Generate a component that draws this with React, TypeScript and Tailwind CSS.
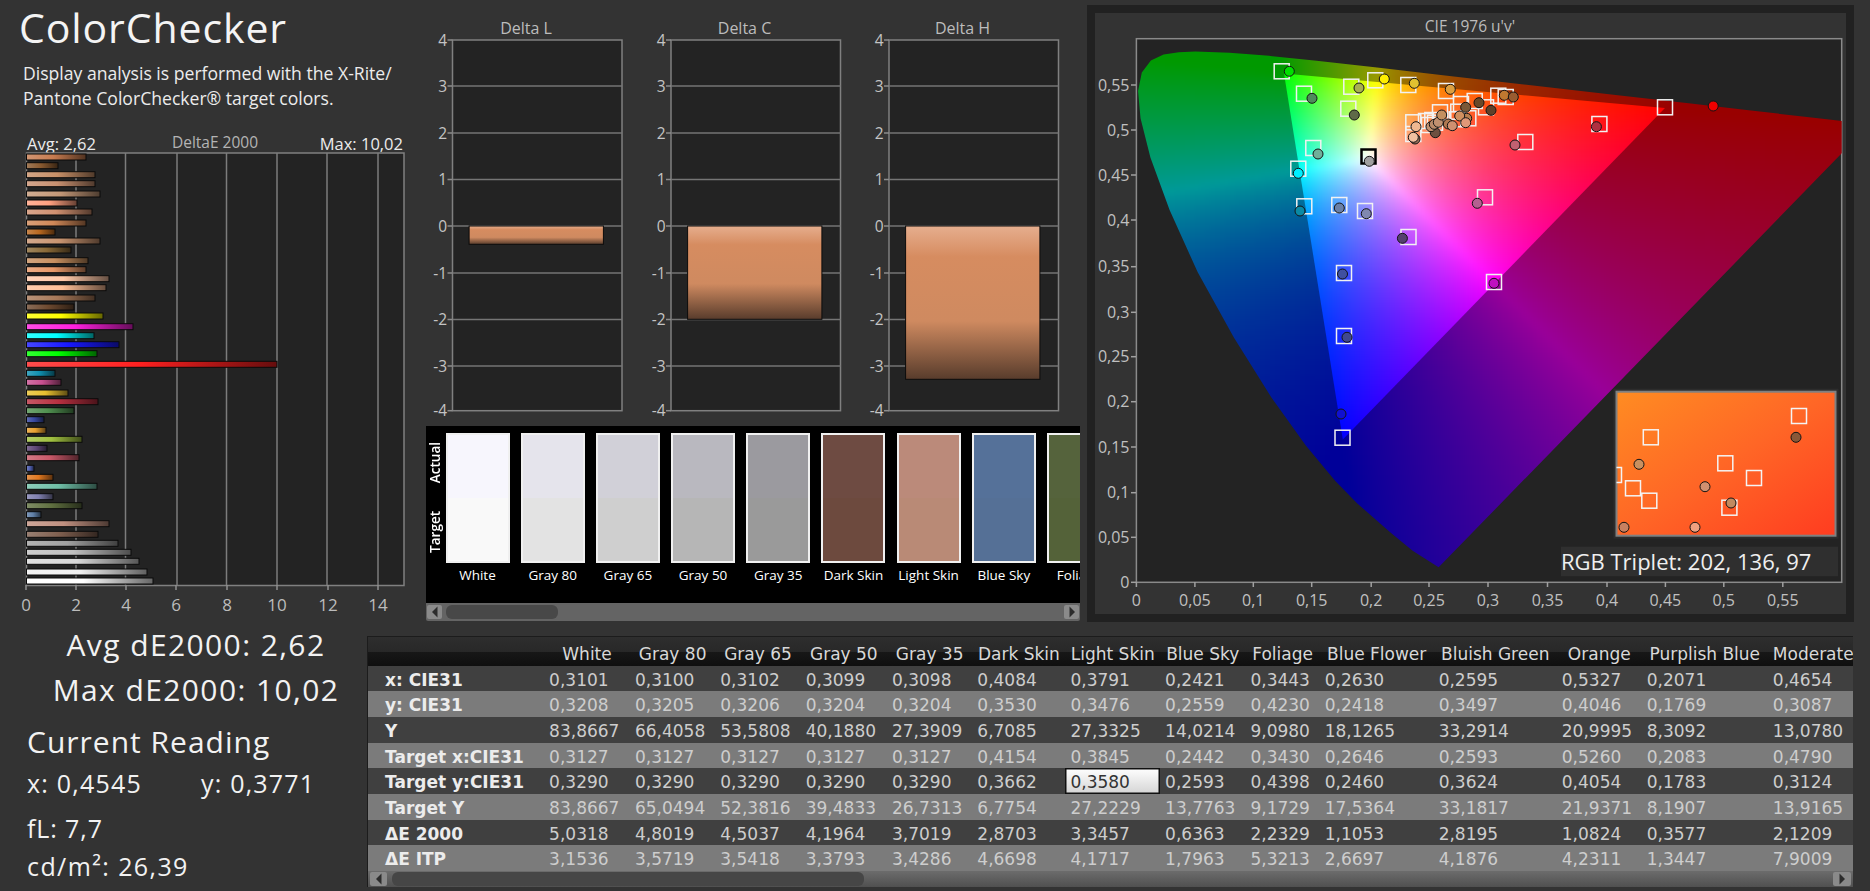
import React from "react";

type Rgb = [number, number, number];
const hex = (h: string): Rgb => [parseInt(h.slice(1, 3), 16), parseInt(h.slice(3, 5), 16), parseInt(h.slice(5, 7), 16)];
const css = (c: Rgb) => `rgb(${c.map((v) => Math.round(v)).join(",")})`;
const mix = (a: Rgb, b: Rgb, t: number): Rgb => [a[0] + (b[0] - a[0]) * t, a[1] + (b[1] - a[1]) * t, a[2] + (b[2] - a[2]) * t];

const BARS: [number, number, string][] = [
  [157, 86, "#c87c50"], [165.7, 58, "#8a5a30"], [174.7, 95, "#c89068"], [183.7, 95, "#c89070"], [194, 100, "#c49878"],
  [203, 77, "#ffa080"], [212, 92, "#d09070"], [223, 86, "#d08858"], [232, 55, "#b86820"], [241, 100, "#c89470"],
  [250, 71, "#8a6a38"], [260.7, 88, "#c89060"], [269.7, 86, "#e89868"], [278.7, 109, "#ffc8a8"], [287.7, 106, "#ffc098"],
  [298, 95, "#a87858"], [307, 74, "#6e4a30"], [316, 103, "#ffff00"], [326.7, 133, "#ff20e0"], [335.7, 94, "#00ffff"],
  [344.7, 119, "#1818ff"], [353.7, 97, "#00ff00"], [364.3, 277, "#ff2020"], [373.3, 55, "#1090b0"], [382.3, 61, "#c85090"],
  [393, 68, "#e8c030"], [401.7, 98, "#b83040"], [410.7, 74, "#509050"], [419.7, 44, "#3848a0"], [430.3, 46, "#e8a030"],
  [439.3, 82, "#a0c040"], [448.3, 47, "#604878"], [457.7, 79, "#c85868"], [468.3, 34, "#5060b0"], [477.3, 53, "#e07820"],
  [486.3, 97, "#70c0a8"], [496.7, 53, "#8080b0"], [505.7, 82, "#607040"], [514.7, 41, "#6080a8"], [523.7, 109, "#c09080"],
  [534.3, 98, "#806050"], [543.3, 118, "#a0a0a0"], [552.3, 131, "#c0c0c0"], [561.3, 139, "#d8d8d8"], [572, 147, "#f0f0f0"], [581, 153, "#ffffff"],
];

function BarChart() {
  const grid = [76, 125.5, 177, 226.5, 277, 327, 378];
  const ticks: [string, number][] = [["0", 26], ["2", 76], ["4", 126], ["6", 176], ["8", 227], ["10", 277], ["12", 328], ["14", 378]];
  return (
    <svg width={426} height={495} viewBox="0 130 426 495" className="block">
      <defs>
        {BARS.map((b, i) => {
          const c = hex(b[2]);
          return (
            <linearGradient key={i} id={`bar${i}`} x1="0" x2="1" y1="0" y2="0">
              <stop offset="0" stopColor={css(mix(c, [255, 255, 255], 0.2))} />
              <stop offset="0.45" stopColor={css(c)} />
              <stop offset="1" stopColor={css(mix(c, [0, 0, 0], 0.6))} />
            </linearGradient>
          );
        })}
      </defs>
      <text x={27} y={150} fontSize={16.5} fill="#ececec">Avg: 2,62</text>
      <text x={215} y={147.5} fontSize={15.5} fill="#b4b4b4" textAnchor="middle">DeltaE 2000</text>
      <text x={403} y={150} fontSize={16.5} fill="#ececec" textAnchor="end">Max: 10,02</text>
      <rect x={26.5} y={153} width={377.5} height={432.5} fill="#232323" stroke="#808080" strokeWidth={1.5} />
      {grid.map((x) => <line key={x} x1={x} x2={x} y1={153} y2={585} stroke="#7c7c7c" strokeWidth={1.5} />)}
      {ticks.map(([t, x]) => (
        <g key={t}>
          <line x1={x} x2={x} y1={585} y2={590} stroke="#909090" strokeWidth={1.5} />
          <text x={x} y={611} fontSize={17} fill="#bcbcbc" textAnchor="middle">{t}</text>
        </g>
      ))}
      {BARS.map((b, i) => (
        <rect key={i} x={26.5} y={b[0] - 3} width={b[1] - 26.5} height={6} fill={`url(#bar${i})`} stroke="#0a0a0a" strokeWidth={1} />
      ))}
    </svg>
  );
}

function DeltaChart({ x, title, depth, id }: { x: number; title: string; depth: number; id: string }) {
  const ys = [40, 86, 133, 179.5, 226, 273, 319.5, 366, 410.7];
  const labels = ["4", "3", "2", "1", "0", "-1", "-2", "-3", "-4"];
  return (
    <g>
      <text x={x + 73.5} y={34} fontSize={16} fill="#bcbcbc" textAnchor="middle">{title}</text>
      <rect x={x} y={40} width={169.5} height={370.7} fill="#232323" stroke="#808080" strokeWidth={1.5} />
      {ys.map((y, i) => (
        <g key={i}>
          {i > 0 && i < 8 && <line x1={x} x2={x + 169.5} y1={y} y2={y} stroke="#757575" strokeWidth={1.5} />}
          <line x1={x - 5} x2={x} y1={y} y2={y} stroke="#8c8c8c" strokeWidth={1.5} />
          <text x={x - 5.5} y={y + 5.5} fontSize={15.5} fill="#c4c4c4" textAnchor="end">{labels[i]}</text>
        </g>
      ))}
      <linearGradient id={id} x1="0" x2="0" y1="0" y2="1">
        <stop offset="0" stopColor="#e6ae8e" />
        <stop offset="0.2" stopColor="#d68c60" />
        <stop offset="0.62" stopColor="#cf8a60" />
        <stop offset="1" stopColor="#583c2c" />
      </linearGradient>
      <rect x={x + 16.6} y={226} width={134.3} height={depth} fill={`url(#${id})`} stroke="#0c0c0c" strokeWidth={1} />
    </g>
  );
}

const SWATCHES: [string, string, string][] = [
  ["White", "#f7f6fd", "#f9f9f9"], ["Gray 80", "#e5e4ec", "#e3e3e3"], ["Gray 65", "#d1d0d8", "#cfcfcf"], ["Gray 50", "#b9b8bf", "#b6b6b6"],
  ["Gray 35", "#9b9a9f", "#9a9a9a"], ["Dark Skin", "#6e4b42", "#6d4a3e"], ["Light Skin", "#bb8a7a", "#b98a76"], ["Blue Sky", "#557199", "#557096"],
  ["Foliage", "#55633c", "#546239"],
];

function Arrow({ dir }: { dir: "left" | "right" }) {
  return (
    <svg width="10" height="12" viewBox="0 0 10 12">
      <path d={dir === "left" ? "M7.5 0.5 L2 6 L7.5 11.5 Z" : "M2.5 0.5 L8 6 L2.5 11.5 Z"} fill="#2c2c2c" />
    </svg>
  );
}

// ---------- CIE 1976 diagram ----------
const LOCUS: [number, number][] = [
  [0.2568, 0.0166], [0.2564, 0.017], [0.2347, 0.035], [0.2161, 0.0549], [0.1877, 0.0871], [0.169, 0.1119], [0.1441, 0.151], [0.1147, 0.2044],
  [0.0828, 0.2708], [0.0521, 0.3427], [0.0282, 0.4117], [0.0119, 0.4698], [0.0035, 0.5131], [0.0014, 0.5432], [0.0046, 0.5638], [0.0123, 0.577],
  [0.0231, 0.5837], [0.036, 0.5861], [0.0501, 0.5868], [0.0792, 0.5856], [0.1127, 0.5821], [0.1531, 0.5766], [0.2026, 0.5694], [0.2623, 0.5604],
  [0.3315, 0.5501], [0.4035, 0.5393], [0.4692, 0.5296], [0.5203, 0.5219], [0.5565, 0.5165], [0.583, 0.5125], [0.6005, 0.5099], [0.6234, 0.5065],
];
const PX = (u: number) => 1136.4 + 1177 * u;
const PY = (v: number) => 582.3 - 904.4 * v;
const locusPts = LOCUS.map(([u, v]): [number, number] => [PX(u), PY(v)]);
const triPts: [number, number][] = [[1665, 108], [1284, 73.5], [1342.8, 439.5]];

function inside(p: [number, number][], x: number, y: number) {
  let c = false;
  for (let i = 0, j = p.length - 1; i < p.length; j = i++) {
    if (p[i][1] > y !== p[j][1] > y && x < ((p[j][0] - p[i][0]) * (y - p[i][1])) / (p[j][1] - p[i][1]) + p[i][0]) c = !c;
  }
  return c;
}

function colorAt(px: number, py: number, k: number) {
  const u = (px - 1136.4) / 1177;
  const v = Math.max((582.3 - py) / 904.4, 0.004);
  const d = 6 * u - 16 * v + 12;
  const x = (9 * u) / d;
  const y = (4 * v) / d;
  const X = x / y;
  const Z = (1 - x - y) / y;
  const lin = [3.2406 * X - 1.5372 - 0.4986 * Z, -0.9689 * X + 1.8758 + 0.0415 * Z, 0.0557 * X - 0.204 + 1.057 * Z].map((c) => Math.max(c, 0));
  const m = Math.max(...lin, 0.0001);
  const g = lin.map((c) => Math.pow(c / m, 0.85) * 255 * k);
  return `rgb(${Math.round(g[0])},${Math.round(g[1])},${Math.round(g[2])})`;
}

const CELL = 5;
function cells(poly: [number, number][], k: number, bx: [number, number], by: [number, number]) {
  const out: React.ReactElement[] = [];
  for (let x = bx[0]; x < bx[1]; x += CELL) {
    for (let y = by[0]; y < by[1]; y += CELL) {
      const cx = x + CELL / 2;
      const cy = y + CELL / 2;
      const m = 9;
      if (inside(poly, cx, cy) || inside(poly, cx - m, cy) || inside(poly, cx + m, cy) || inside(poly, cx, cy - m) || inside(poly, cx, cy + m)) {
        out.push(<rect key={`${x}-${y}`} x={x} y={y} width={CELL + 0.5} height={CELL + 0.5} fill={colorAt(cx, cy, k)} />);
      }
    }
  }
  return out;
}
const DIM_CELLS = cells(locusPts, 0.6, [1130, 1850], [40, 570]);
const BRIGHT_CELLS = cells(triPts, 1, [1270, 1680], [60, 450]);
const polyStr = (p: [number, number][]) => p.map((a) => a.join(",")).join(" ");

const SQUARES: [number, number][] = [
  [1281.7, 71.3], [1304, 93.7], [1351.3, 86.7], [1375.3, 80.3], [1408.3, 85], [1446, 91], [1348.3, 108.7], [1313.3, 148], [1298.3, 168.7],
  [1304.3, 206.3], [1339.3, 205], [1365, 211], [1485, 197.3], [1525.3, 142], [1599.4, 124], [1665, 107.3], [1408.5, 237], [1344, 273], [1494, 282],
  [1344, 336], [1342.5, 437.7],
  [1413.3, 122.3], [1413.3, 134], [1432.3, 120], [1435, 122.7], [1440, 112.3], [1461, 104], [1474.7, 101], [1486, 107.3], [1498.3, 95.7], [1505.7, 97],
  [1458.3, 111.7], [1468.3, 118.3], [1456.7, 119.3], [1426, 121], [1429, 125],
];
const CIRCLES: [number, number, string][] = [
  [1289.3, 71.3, "#00e000"], [1312, 98.3, "#4f8a5c"], [1359, 88, "#a8b050"], [1384.3, 79, "#ffee00"], [1414.3, 83.3, "#e0c030"], [1450.3, 89.3, "#dda040"],
  [1354.3, 115, "#5f6a48"], [1318, 154, "#70b09a"], [1298.3, 173.3, "#00f0ff"], [1300, 211, "#0a8aa5"], [1339.3, 208, "#6a80a8"], [1366.3, 213.7, "#8088b0"],
  [1369.3, 161.3, "#a0a0a0"], [1477.3, 203.3, "#b56090"], [1515, 145, "#c06070"], [1596.4, 126.7, "#b03040"], [1713.2, 106, "#f00000"],
  [1402.4, 238.3, "#554070"], [1342.5, 274, "#4050a0"], [1494, 283.3, "#c010c0"], [1347, 337.3, "#404890"], [1341, 414, "#1010d0"],
  [1415, 139, "#9a7058"], [1416, 126.7, "#f0b890"], [1413.3, 137.3, "#f0c0a0"], [1435.3, 132.7, "#6e5040"], [1431, 126.7, "#c09070"], [1434.3, 124.3, "#b88a6a"],
  [1438.3, 122.3, "#c09070"], [1441.7, 115, "#c49060"], [1448.3, 124, "#b07850"], [1452.3, 125.7, "#d09070"], [1466.7, 118.3, "#b88050"], [1459.7, 116, "#d09060"],
  [1465.7, 122.7, "#e09878"], [1465.7, 107.3, "#7a5838"], [1479, 102.7, "#6a4828"], [1491, 110.3, "#5e4028"], [1504.3, 95.3, "#c07830"], [1513.3, 97, "#9a5c30"],
];
const INSET_SQ: [number, number][] = [[1650.8, 437.3], [1799, 416], [1725.3, 463.3], [1754, 478], [1633, 488.3], [1649.3, 500.7], [1729.4, 507.7], [1614, 475]];
const INSET_C: [number, number, string][] = [[1796, 437.3, "#8a5838"], [1639, 464.3, "#c89060"], [1705, 486.7, "#d09070"], [1731, 503, "#c08a60"], [1624, 527.3, "#c88060"], [1695, 527.3, "#f0a080"]];

function GamutChart() {
  const yt: [string, number][] = [["0,55", 85], ["0,5", 130], ["0,45", 175], ["0,4", 220], ["0,35", 266.7], ["0,3", 312.3], ["0,25", 356.7], ["0,2", 401.7], ["0,15", 447], ["0,1", 492.7], ["0,05", 537.3], ["0", 582.3]];
  const xt: [string, number][] = [["0", 1136.4], ["0,05", 1194.9], ["0,1", 1253.3], ["0,15", 1311.7], ["0,2", 1371.2], ["0,25", 1429], ["0,3", 1488], ["0,35", 1547.5], ["0,4", 1607], ["0,45", 1665.4], ["0,5", 1723.8], ["0,55", 1782.8]];
  return (
    <svg width={751} height={601} viewBox="1095 13 751 601" className="block">
      <defs>
        <clipPath id="plot"><rect x={1136.4} y={38.7} width={705.3} height={543.6} /></clipPath>
        <clipPath id="loc"><polygon points={polyStr(locusPts)} strokeLinejoin="round" /></clipPath>
        <clipPath id="tri"><polygon points={polyStr(triPts)} /></clipPath>
        <clipPath id="ins"><rect x={1616.5} y={391.7} width={219} height={144} /></clipPath>
        <filter id="soft" x="-3%" y="-3%" width="106%" height="106%" colorInterpolationFilters="sRGB"><feGaussianBlur stdDeviation="2.6" /></filter>
        <linearGradient id="inset" x1="0" x2="1" y1="0" y2="1">
          <stop offset="0" stopColor="#ff8c22" />
          <stop offset="0.5" stopColor="#ff6626" />
          <stop offset="1" stopColor="#ff3c20" />
        </linearGradient>
      </defs>
      <text x={1470} y={32} fontSize={15.5} fill="#bcbcbc" textAnchor="middle">CIE 1976 u'v'</text>
      <rect x={1136.4} y={38.7} width={705.3} height={543.6} fill="#232323" stroke="#8a8a8a" strokeWidth={1.5} />
      <g clipPath="url(#plot)">
        <g clipPath="url(#loc)"><g filter="url(#soft)">{DIM_CELLS}</g></g>
        <g clipPath="url(#tri)"><g filter="url(#soft)">{BRIGHT_CELLS}</g></g>
      </g>
      {yt.map(([t, y]) => (
        <g key={t}>
          <line x1={1131} x2={1136} y1={y} y2={y} stroke="#a0a0a0" strokeWidth={1.5} />
          <text x={1129.5} y={y + 5.5} fontSize={16} fill="#c0c0c0" textAnchor="end">{t}</text>
        </g>
      ))}
      {xt.map(([t, x]) => (
        <g key={t}>
          <line x1={x} x2={x} y1={582} y2={587} stroke="#a0a0a0" strokeWidth={1.5} />
          <text x={x} y={606} fontSize={16} fill="#c0c0c0" textAnchor="middle">{t}</text>
        </g>
      ))}
      {SQUARES.map(([x, y], i) => <rect key={i} x={x - 7.5} y={y - 7.5} width={15} height={15} fill="none" stroke="#f2f2f2" strokeWidth={1.5} />)}
      <rect x={1361.5} y={149.5} width={14} height={14} fill="none" stroke="#000" strokeWidth={2.5} />
      {CIRCLES.map(([x, y, c], i) => <circle key={i} cx={x} cy={y} r={5} fill={c} stroke="#141414" strokeWidth={1} />)}

      <rect x={1613.5} y={388.7} width={225} height={150} fill="#2c2c2c" />
      <rect x={1616.5} y={391.7} width={219} height={144} fill="url(#inset)" stroke="#808080" strokeWidth={2} />
      <g clipPath="url(#ins)">
        {INSET_SQ.map(([x, y], i) => <rect key={i} x={x - 7.5} y={y - 7.5} width={15} height={15} fill="none" stroke="#f4f4f4" strokeWidth={1.5} />)}
        {INSET_C.map(([x, y, c], i) => <circle key={i} cx={x} cy={y} r={5} fill={c} stroke="#141414" strokeWidth={1} />)}
      </g>
      <rect x={1561} y={546.7} width={277} height={29.5} fill="#2f2f2f" />
      <text x={1561} y={570} fontSize={22} fill="#efefef">RGB Triplet: 202, 136, 97</text>
    </svg>
  );
}

const COLS = ["White", "Gray 80", "Gray 65", "Gray 50", "Gray 35", "Dark Skin", "Light Skin", "Blue Sky", "Foliage", "Blue Flower", "Bluish Green", "Orange", "Purplish Blue"];
const ROWS: { label: string; h: string; bg: string; v: string[] }[] = [
  { label: "x: CIE31", h: "h-[25px]", bg: "bg-[#404040]", v: "0,3101 0,3100 0,3102 0,3099 0,3098 0,4084 0,3791 0,2421 0,3443 0,2630 0,2595 0,5327 0,2071 0,4654".split(" ") },
  { label: "y: CIE31", h: "h-[26px]", bg: "bg-[#7b7b7b]", v: "0,3208 0,3205 0,3206 0,3204 0,3204 0,3530 0,3476 0,2559 0,4230 0,2418 0,3497 0,4046 0,1769 0,3087".split(" ") },
  { label: "Y", h: "h-[26px]", bg: "bg-[#404040]", v: "83,8667 66,4058 53,5808 40,1880 27,3909 6,7085 27,3325 14,0214 9,0980 18,1265 33,2914 20,9995 8,3092 13,0780".split(" ") },
  { label: "Target x:CIE31", h: "h-[25px]", bg: "bg-[#7b7b7b]", v: "0,3127 0,3127 0,3127 0,3127 0,3127 0,4154 0,3845 0,2442 0,3430 0,2646 0,2593 0,5260 0,2083 0,4790".split(" ") },
  { label: "Target y:CIE31", h: "h-[26px]", bg: "bg-[#404040]", v: "0,3290 0,3290 0,3290 0,3290 0,3290 0,3662 0,3580 0,2593 0,4398 0,2460 0,3624 0,4054 0,1783 0,3124".split(" ") },
  { label: "Target Y", h: "h-[26px]", bg: "bg-[#7b7b7b]", v: "83,8667 65,0494 52,3816 39,4833 26,7313 6,7754 27,2229 13,7763 9,1729 17,5364 33,1817 21,9371 8,1907 13,9165".split(" ") },
  { label: "ΔE 2000", h: "h-[25px]", bg: "bg-[#404040]", v: "5,0318 4,8019 4,5037 4,1964 3,7019 2,8703 3,3457 0,6363 2,2329 1,1053 2,8195 1,0824 0,3577 2,1209".split(" ") },
  { label: "ΔE ITP", h: "h-[26px]", bg: "bg-[#7b7b7b]", v: "3,1536 3,5719 3,5418 3,3793 3,4286 4,6698 4,1717 1,7963 5,3213 2,6697 4,1876 4,2311 1,3447 7,9009".split(" ") },
];

function DataTable() {
  return (
    <div className="mt-[11px] w-[1486px] h-[251px] bg-[#262626] overflow-hidden flex flex-col border-l border-t border-[#1c1c1c]">
      <div className="overflow-hidden h-[234px] shrink-0">
        <table className="table-fixed border-collapse w-[1500px] font-['DejaVu_Sans',sans-serif] text-[17px] leading-[20px] whitespace-nowrap">
          <colgroup>
            <col className="w-[176px]" />
            <col className="w-[85.8px]" /><col className="w-[85.3px]" /><col className="w-[85.4px]" /><col className="w-[86.2px]" /><col className="w-[85.3px]" />
            <col className="w-[93.1px]" /><col className="w-[94.6px]" /><col className="w-[85.3px]" /><col className="w-[74.2px]" /><col className="w-[113.9px]" />
            <col className="w-[123.1px]" /><col className="w-[84.9px]" /><col className="w-[126px]" /><col className="w-[100px]" />
          </colgroup>
          <thead>
            <tr className="h-[29px] bg-[linear-gradient(#2e2e2e_0%,#282828_50%,#171717_50%,#0f0f0f_100%)]">
              <th />
              {COLS.map((c) => <th key={c} className="font-normal text-[#d8d8d8] text-center p-0 pt-[4px] overflow-hidden">{c}</th>)}
              <th className="font-normal text-[#d8d8d8] text-left p-0 pt-[4px] pl-[5px]">Moderate Red</th>
            </tr>
          </thead>
          <tbody>
            {ROWS.map((r) => (
              <tr key={r.label} className={`${r.h} ${r.bg}`}>
                <td className="p-0 pl-[17px] pt-[2px] font-bold text-[#ececec]">{r.label}</td>
                {r.v.map((v, i) =>
                  v === "0,3580" ? (
                    <td key={i} className="p-0 pl-[5px] pt-[2px] text-[#333] bg-[linear-gradient(#ffffff,#d4d4d4)] shadow-[inset_0_0_0_1.5px_#101010]">{v}</td>
                  ) : (
                    <td key={i} className="p-0 pl-[5px] pt-[2px] text-[#cdcdcd]">{v}</td>
                  )
                )}
              </tr>
            ))}
          </tbody>
        </table>
      </div>
      <div className="h-[16px] flex items-center bg-[linear-gradient(#6c6c6c,#505050)] pl-[2px] pr-[2px]">
        <div className="w-[17px] h-[14px] bg-[#8a8a8a] rounded-[2px] flex items-center justify-center"><Arrow dir="left" /></div>
        <div className="ml-[5px] w-[472px] h-[14px] bg-[#464646] rounded-[6px]" />
        <div className="ml-auto w-[18px] h-[14px] bg-[#8a8a8a] rounded-[2px] flex items-center justify-center"><Arrow dir="right" /></div>
      </div>
    </div>
  );
}

export default function App() {
  return (
    <div className="w-[1870px] h-[891px] bg-[#333333] overflow-hidden font-['Open_Sans',sans-serif] text-[#eeeeee] flex flex-col">
      <div className="h-[625px] flex shrink-0">
        {/* Left column */}
        <div className="w-[426px] shrink-0">
          <h1 className="mt-[4px] pl-[19px] text-[41px] leading-[46px] font-normal tracking-[0.9px] text-[#f4f4f4]">ColorChecker</h1>
          <p className="mt-[11px] pl-[23px] text-[17.6px] leading-[24.5px] text-[#ececec]">
            Display analysis is performed with the X-Rite/
            <br />
            Pantone ColorChecker® target colors.
          </p>
          <div className="mt-[20px]"><BarChart /></div>
        </div>

        {/* Middle column */}
        <div className="w-[654px] shrink-0">
          <svg width={654} height={426} viewBox="426 0 654 426" className="block">
            <DeltaChart x={452.5} title="Delta L" depth={18.3} id="dl" />
            <DeltaChart x={671} title="Delta C" depth={93.3} id="dc" />
            <DeltaChart x={889} title="Delta H" depth={153.3} id="dh" />
          </svg>
          <div className="h-[177px] bg-black overflow-hidden flex pt-[7px]">
            <div className="w-[19.5px] h-[130px] shrink-0 flex flex-col items-center justify-between pt-[9px] pb-[10px] text-[13.5px] font-semibold leading-none text-white">
              <span className="[writing-mode:vertical-rl] rotate-180">Actual</span>
              <span className="[writing-mode:vertical-rl] rotate-180">Target</span>
            </div>
            <div className="flex gap-[11.2px]">
              {SWATCHES.map(([name, a, t]) => (
                <div key={name} className="w-[64px] shrink-0">
                  <div className="h-[130px] border-2 border-[#f0f0f0] flex flex-col">
                    <div className="flex-1" style={{ background: a }} />
                    <div className="flex-1" style={{ background: t }} />
                  </div>
                  <div className="mt-[2px] text-center text-[13.5px] leading-[20px] text-white whitespace-nowrap">{name}</div>
                </div>
              ))}
            </div>
          </div>
          <div className="h-[18px] bg-[#646464] flex items-center rounded-b-[2px]">
            <div className="w-[15px] h-[14px] ml-[1px] bg-[#8a8a8a] rounded-[2px] flex items-center justify-center"><Arrow dir="left" /></div>
            <div className="ml-[4px] w-[112px] h-[14px] bg-[#484848] rounded-[6px]" />
            <div className="ml-auto w-[15px] h-[14px] mr-[1px] bg-[#8a8a8a] rounded-[2px] flex items-center justify-center"><Arrow dir="right" /></div>
          </div>
        </div>

        {/* Gamut */}
        <div className="ml-[7px] mt-[5px] w-[767px] h-[617px] bg-[#212121] p-[8px]">
          <div className="bg-[#333333] w-[751px] h-[601px]"><GamutChart /></div>
        </div>
      </div>

      <div className="flex flex-1 min-h-0">
        <div className="w-[367px] shrink-0 pt-[1px]">
          <div className="w-[392px] text-center text-[30px] leading-[38px] tracking-[1.4px] text-[#f2f2f2]">Avg dE2000: 2,62</div>
          <div className="w-[392px] mt-[7px] text-center text-[30px] leading-[38px] tracking-[1.4px] text-[#f2f2f2]">Max dE2000: 10,02</div>
          <div className="mt-[14px] pl-[27px] text-[30px] leading-[38px] tracking-[1px] text-[#f2f2f2]">Current Reading</div>
          <div className="mt-[6px] pl-[27px] flex text-[25px] leading-[32px] tracking-[1.2px] text-[#f2f2f2]">
            <span className="w-[174px]">x: 0,4545</span>
            <span>y: 0,3771</span>
          </div>
          <div className="mt-[12.5px] pl-[27px] text-[25px] leading-[32px] tracking-[0.9px] text-[#f2f2f2]">fL: 7,7</div>
          <div className="mt-[6px] pl-[27px] text-[25px] leading-[32px] tracking-[1.4px] text-[#f2f2f2]">cd/m²: 26,39</div>
        </div>
        <DataTable />
      </div>
    </div>
  );
}
